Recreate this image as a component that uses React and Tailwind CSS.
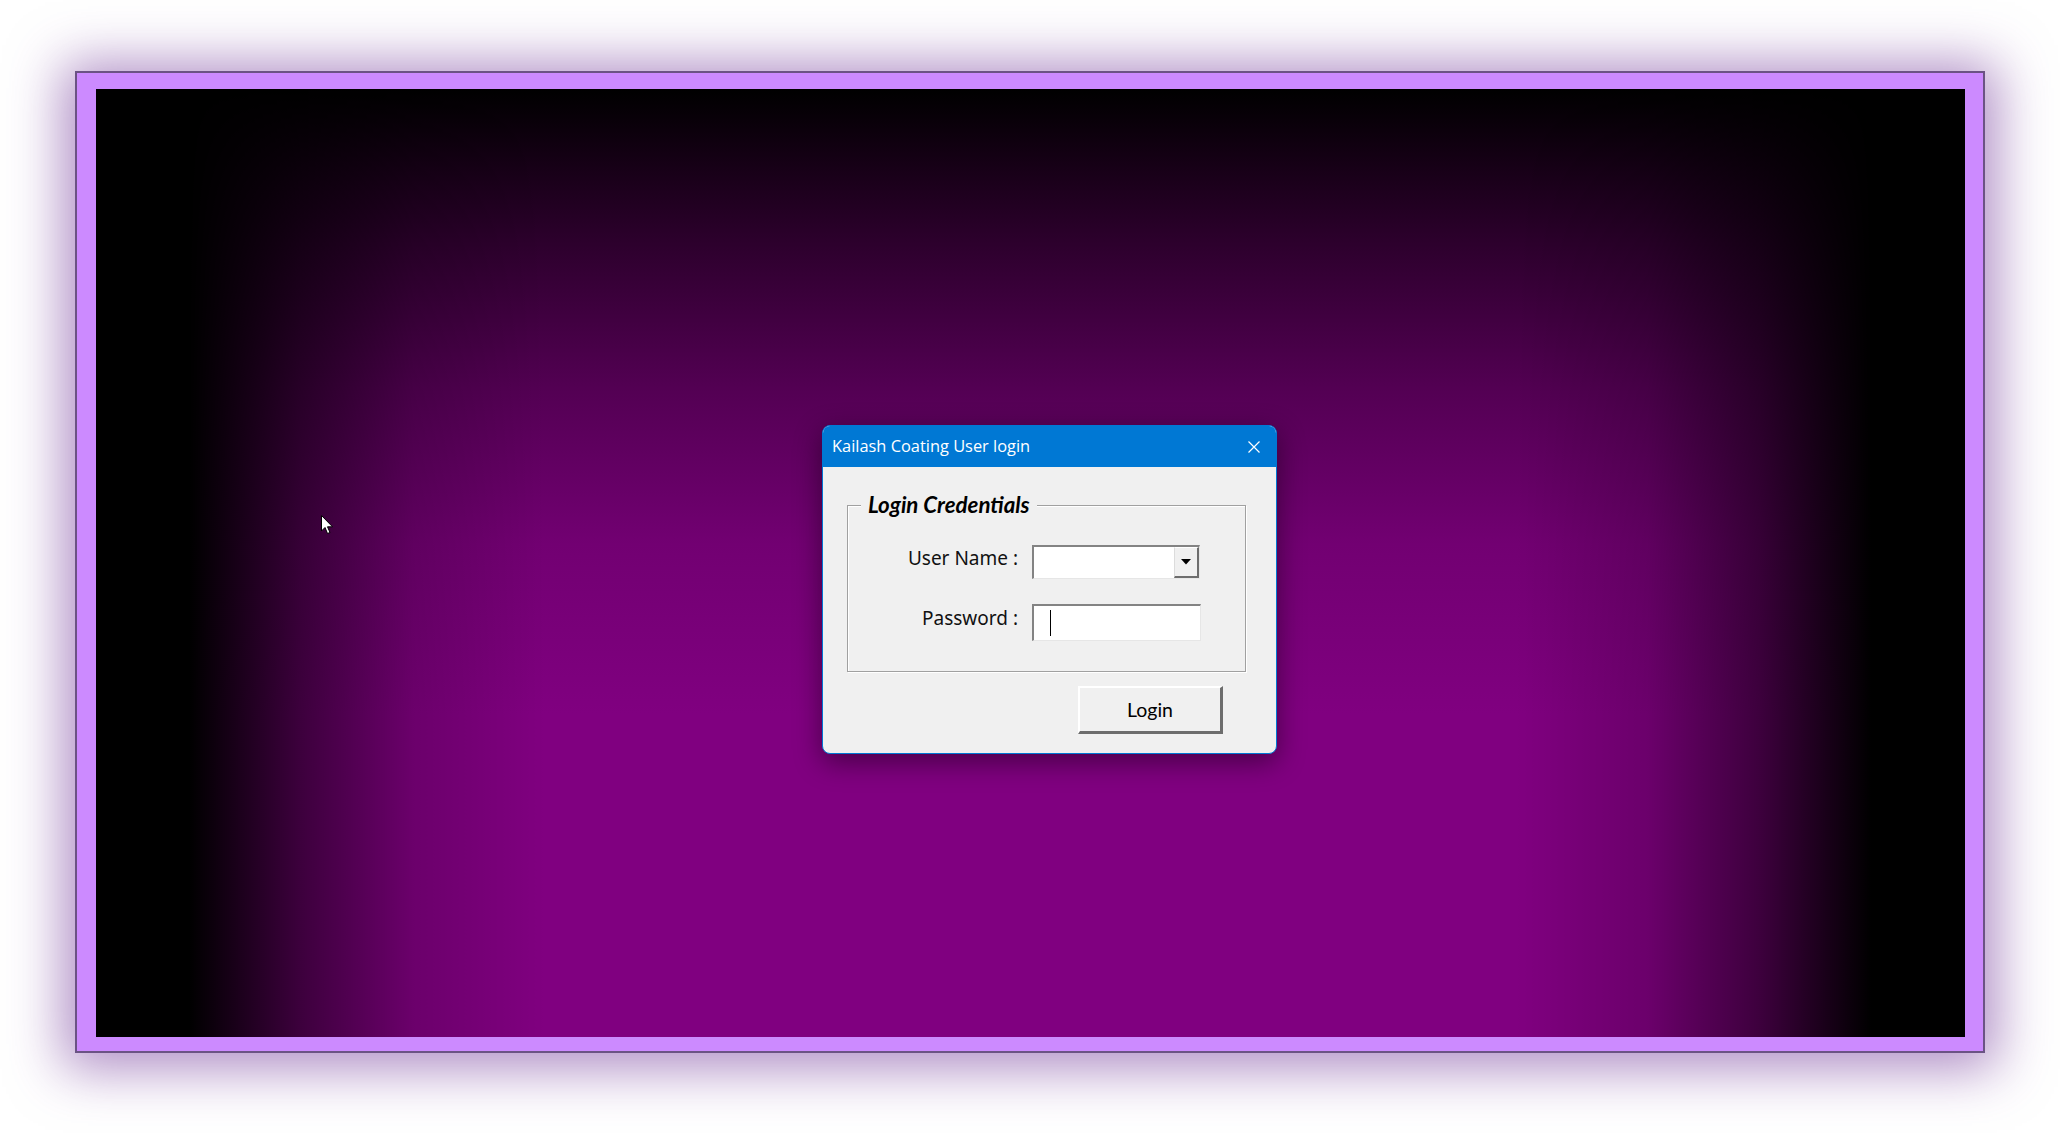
import React from 'react';

function Cursor() {
  return (
    <svg className="absolute left-[225px] top-[426px]" width="14" height="21" viewBox="0 0 14 21">
      <path d="M0.5 0.5 L0.5 16 L4 12.5 L6.5 18.5 L9 17.5 L6.5 11.8 L11.5 11.8 Z" fill="#fff" stroke="#000" strokeWidth="1" strokeLinejoin="miter" />
    </svg>
  );
}

function Sunken({ className, children }) {
  return (
    <div className={`flex border-t-2 border-l-2 border-r border-b border-t-[#838383] border-l-[#838383] border-r-[#e6e6e6] border-b-[#e6e6e6] bg-white ${className}`}>
      {children}
    </div>
  );
}

export default function App() {
  return (
    <div className="w-[2060px] h-[1133px] bg-white pt-[71px] pl-[75px] overflow-hidden">
      <div className="w-[1910px] h-[982px] border-2 border-[#6b5384] bg-[#cc8aff] pt-[16px] pl-[19px] shadow-[0_4px_50px_12px_rgba(110,50,150,0.55)]">
        <div className="relative w-[1869px] h-[948px] overflow-hidden bg-blend-multiply bg-[linear-gradient(90deg,#000_5%,#7a7a7a_11%,#d6d6d6_17%,#fff_24%,#fff_76%,#d6d6d6_83%,#7a7a7a_89%,#000_95%),linear-gradient(180deg,#000_0%,#2c002c_16%,#540054_32%,#720072_48%,#800080_66%,#800080_100%)]">
          <Cursor />

          <div className="ml-[726px] mt-[336px] w-[455px] h-[329px] rounded-[8px] border border-[#0078d4] bg-[#f0f0f0] overflow-hidden flex flex-col shadow-[0_8px_28px_rgba(0,0,0,0.45)]">
            <div className="h-[41px] shrink-0 bg-[#0078d4] flex items-center justify-between pl-[9px] pr-[16px] text-white font-['Open_Sans',sans-serif] text-[16.4px]">
              <span>Kailash Coating User login</span>
              <svg width="12" height="12" viewBox="0 0 12 12">
                <path d="M0.5 0.5 L11.5 11.5 M11.5 0.5 L0.5 11.5" stroke="#fff" strokeWidth="1.2" />
              </svg>
            </div>

            <div className="relative ml-[24px] mt-[38px] w-[399px] h-[167px] border border-[#a0a0a0] shadow-[1px_1px_0_#fff,inset_1px_1px_0_#fff] pt-[39px]">
              <span className="absolute -top-[15px] left-[13px] px-[7px] bg-[#f0f0f0] font-['Lato',sans-serif] font-bold italic text-[22.3px] leading-[28px] text-black">
                Login Credentials
              </span>

              <div className="flex flex-col gap-[25px] font-['Noto_Sans',sans-serif] text-[19px] text-[#111]">
                <div className="flex items-center">
                  <span className="w-[170px] text-right -translate-y-[4px]">User Name :</span>
                  <Sunken className="ml-[14px] w-[168px] h-[34px] justify-end">
                    <div className="w-[25px] h-full flex items-center justify-center bg-[#f0f0f0] border-l border-t border-l-[#dcdcdc] border-t-white border-r-2 border-b-2 border-r-[#6d6d6d] border-b-[#6d6d6d]">
                      <svg width="10" height="6" viewBox="0 0 10 6">
                        <path d="M0 0 L10 0 L5 5.5 Z" fill="#000" />
                      </svg>
                    </div>
                  </Sunken>
                </div>
                <div className="flex items-center">
                  <span className="w-[170px] text-right -translate-y-[4px]">Password :</span>
                  <Sunken className="ml-[14px] w-[169px] h-[37px] items-center pl-[16px]">
                    <div className="w-px h-[26px] bg-black" />
                  </Sunken>
                </div>
              </div>
            </div>

            <button className="ml-[255px] mt-[14px] w-[145px] h-[48px] bg-[#f0f0f0] border-t-2 border-l-2 border-t-white border-l-white border-r-[3px] border-b-[3px] border-r-[#6d6d6d] border-b-[#6d6d6d] font-['Lato',sans-serif] text-[19.5px] text-black">
              Login
            </button>
          </div>
        </div>
      </div>
    </div>
  );
}
